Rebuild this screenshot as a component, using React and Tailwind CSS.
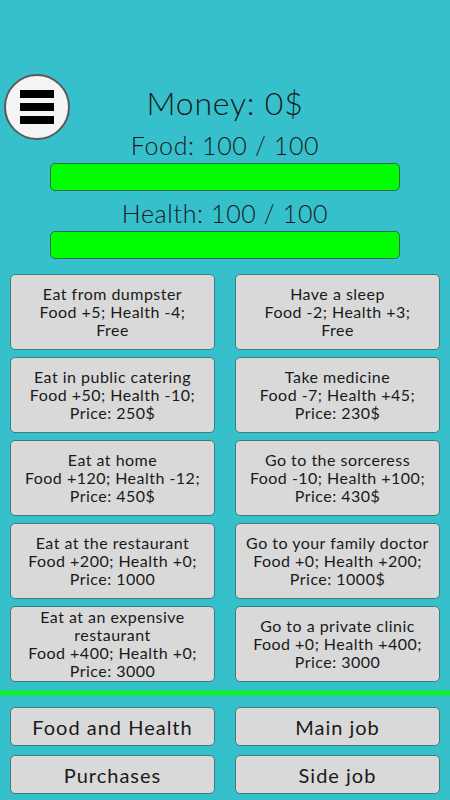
const cards = [
  ['Eat from dumpster', 'Food +5; Health -4;', 'Free'],
  ['Have a sleep', 'Food -2; Health +3;', 'Free'],
  ['Eat in public catering', 'Food +50; Health -10;', 'Price: 250$'],
  ['Take medicine', 'Food -7; Health +45;', 'Price: 230$'],
  ['Eat at home', 'Food +120; Health -12;', 'Price: 450$'],
  ['Go to the sorceress', 'Food -10; Health +100;', 'Price: 430$'],
  ['Eat at the restaurant', 'Food +200; Health +0;', 'Price: 1000'],
  ['Go to your family doctor', 'Food +0; Health +200;', 'Price: 1000$'],
  ['Eat at an expensive restaurant', 'Food +400; Health +0;', 'Price: 3000'],
  ['Go to a private clinic', 'Food +0; Health +400;', 'Price: 3000'],
];

const tabs = ['Food and Health', 'Main job', 'Purchases', 'Side job'];

function Bar() {
  return (
    <div className="mx-[50px] h-[28px] rounded-[5px] border border-[#2a6b45] bg-[#00ff00]" />
  );
}

export default function App() {
  return (
    <div
      className="h-[800px] w-[450px] overflow-hidden bg-[#35c0cc] text-[#1c1818]"
      style={{ fontFamily: '"Lato", "DejaVu Sans", sans-serif' }}
    >
      {/* header */}
      <div className="relative pt-[82px]">
        <button className="absolute left-[4px] top-[74px] flex h-[66px] w-[66px] flex-col items-center justify-center gap-[5px] rounded-full border-2 border-[#5a5a5a] bg-[#f4f4f4]">
          <span className="block h-[8px] w-[34px] bg-black" />
          <span className="block h-[8px] w-[34px] bg-black" />
          <span className="block h-[8px] w-[34px] bg-black" />
        </button>
        <div className="h-[42px] text-center text-[32px] leading-[42px] font-light tracking-wide">Money: 0$</div>
        <div className="mt-[4px] h-[34px] text-center text-[25px] leading-[34px] font-light tracking-wide">Food: 100 / 100</div>
        <div className="mt-[1px]">
          <Bar />
        </div>
        <div className="mt-[5px] h-[34px] text-center text-[25px] leading-[34px] font-light tracking-wide">Health: 100 / 100</div>
        <div className="mt-[1px]">
          <Bar />
        </div>
      </div>

      {/* actions */}
      <div className="mt-[15px] grid grid-cols-2 gap-x-[20px] gap-y-[7px] px-[10px]">
        {cards.map((c, i) => (
          <button
            key={i}
            className="flex h-[76px] flex-col items-center justify-center rounded-[5px] border border-[#3f7a7c] bg-[#d9d9d9] px-1 text-center text-[16px] leading-[18px] font-normal tracking-[0.03em] text-[#1a1a1a]"
          >
            <span>{c[0]}</span>
            <span>{c[1]}</span>
            <span>{c[2]}</span>
          </button>
        ))}
      </div>

      <div className="mt-[9px] h-[4px] bg-[#00ff00]" />

      {/* tabs */}
      <div className="mt-[12px] grid grid-cols-2 gap-x-[20px] gap-y-[9px] px-[10px]">
        {tabs.map((t) => (
          <button
            key={t}
            className="h-[39px] rounded-[5px] border border-[#3f7a7c] bg-[#d9d9d9] text-center text-[20px] font-normal tracking-wider text-[#1a1a1a]"
          >
            {t}
          </button>
        ))}
      </div>
    </div>
  );
}
